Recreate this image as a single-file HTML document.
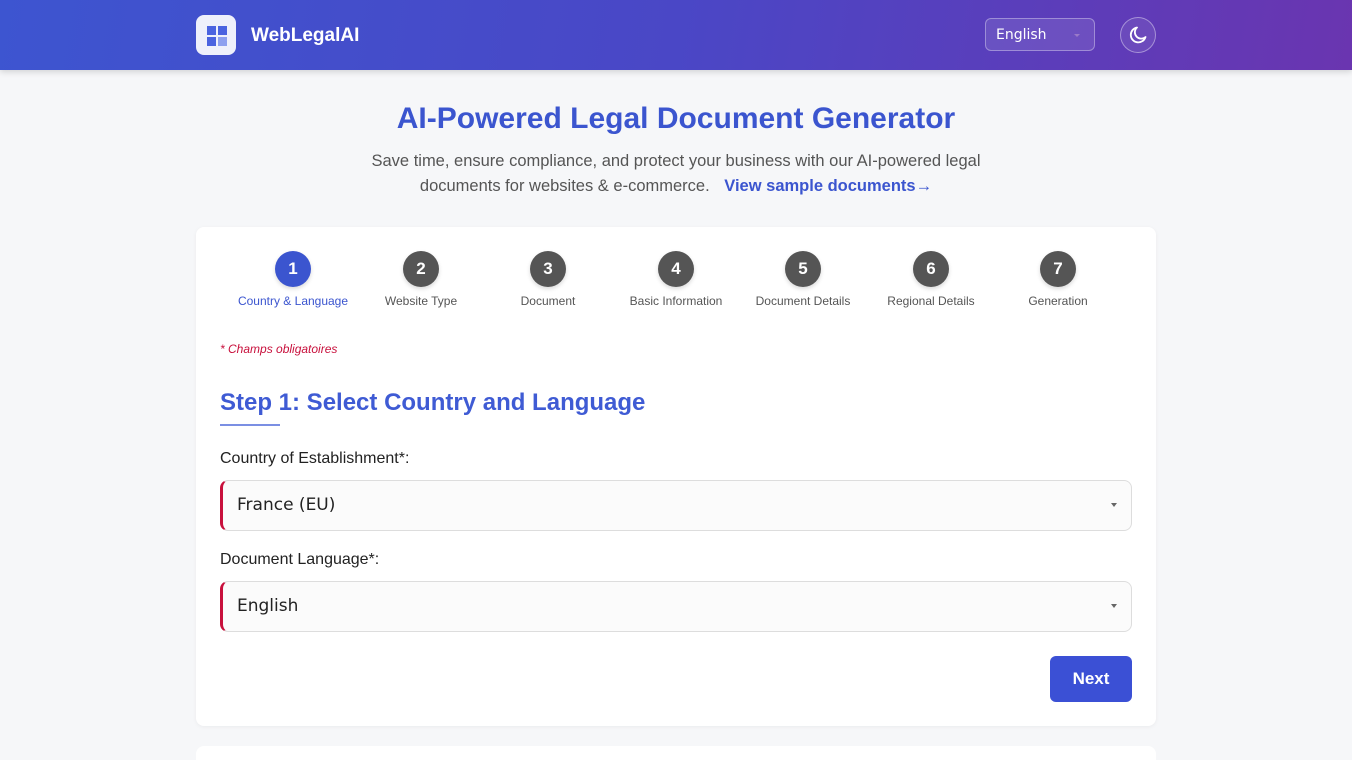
<!DOCTYPE html>
<html style="height:760px;overflow:hidden"><head><meta charset="utf-8"><style>
*{box-sizing:border-box;margin:0;padding:0}
body{width:1352px;height:760px;overflow:hidden;background:#f6f7f9;font-family:"Liberation Sans",sans-serif;color:#222;position:relative}
.hdr{height:70px;background:linear-gradient(100deg,#3d55d0 0%,#4a47c6 50%,#6a35b0 100%);position:relative;box-shadow:0 2px 6px rgba(0,0,0,.15)}
.logo{position:absolute;left:196px;top:15px;width:40px;height:40px;border-radius:8px;background:#eef0fb}
.logo i{position:absolute;width:9px;height:9px;background:#4a63e0}
.brand{position:absolute;left:251px;top:25px;color:#fff;font-weight:bold;font-size:19px}
.lang{position:absolute;left:985px;top:18px;width:110px;height:33px;border:1px solid rgba(255,255,255,.35);background:rgba(255,255,255,.1);border-radius:6px;color:#fff;font-size:14px;padding:8px 10px;font-family:"DejaVu Sans",sans-serif}
.lang:after{content:"";position:absolute;right:14px;top:15px;border:3px solid transparent;border-top:3px solid #9a7ac8}
.moon{position:absolute;left:1120px;top:17px;width:36px;height:36px;border-radius:50%;border:1px solid rgba(255,255,255,.4);background:rgba(255,255,255,.08)}
h1{position:absolute;top:102px;width:100%;text-align:center;color:#3b55cf;font-size:30px;font-weight:bold}
.sub{position:absolute;top:149px;left:356px;width:640px;text-align:center;color:#555;font-size:16.5px;line-height:25px}
.sub a{color:#3b55cf;font-weight:bold;text-decoration:none;margin-left:10px}
.card{position:absolute;left:196px;top:227px;width:960px;height:499px;background:#fff;border-radius:8px;box-shadow:0 1px 4px rgba(0,0,0,.05)}
.card2{position:absolute;left:196px;top:746px;width:960px;height:40px;background:#fff;border-radius:8px}
.step{position:absolute;top:24px;width:140px;text-align:center}
.step b{display:block;margin:0 auto;width:36px;height:36px;border-radius:50%;background:#555;color:#fff;font-size:17px;line-height:36px;box-shadow:0 2px 4px rgba(0,0,0,.15)}
.step span{display:block;margin-top:7px;font-size:12px;color:#555}
.step.on b{background:#3b55cf}.step.on span{color:#3b55cf}
.req{position:absolute;left:24px;top:115px;font-size:12px;font-style:italic;color:#c8103c}
h2{position:absolute;left:24px;top:162px;font-size:24px;color:#3f5bd4;font-weight:bold}
.ul{position:absolute;left:24px;top:197px;width:60px;height:2px;background:#7b8fe3}
.lbl{position:absolute;left:24px;font-size:16px;color:#222}
.sel{position:absolute;left:24px;width:912px;height:51px;border:1px solid #ddd;border-left:3px solid #c8103c;border-radius:8px;background:#fbfbfb;font-size:17px;padding:14px 14px;font-family:"DejaVu Sans",sans-serif;color:#222}
.sel:after{content:"";position:absolute;right:14px;top:22px;border:3px solid transparent;border-top:4px solid #666}
.btn{position:absolute;left:854px;top:429px;width:82px;height:46px;border-radius:6px;background:#3b50d5;color:#fff;font-weight:bold;font-size:17px;text-align:center;line-height:46px}
</style></head><body>
<div class="hdr">
<div class="logo"><i style="left:11px;top:11px"></i><i style="left:22px;top:11px"></i><i style="left:11px;top:22px"></i><i style="left:22px;top:22px;background:#8da0ef"></i></div>
<div class="brand">WebLegalAI</div>
<div class="lang">English</div>
<div class="moon"><svg width="34" height="34" viewBox="0 0 34 34"><path d="M16 9.5a7.5 7.5 0 1 0 8.5 9.5a6 6 0 0 1-8.5-9.5z" fill="none" stroke="#fff" stroke-width="1.8" stroke-linejoin="round"/></svg></div>
</div>
<h1>AI-Powered Legal Document Generator</h1>
<div class="sub">Save time, ensure compliance, and protect your business with our AI-powered legal documents for websites &amp; e-commerce. <a>View sample documents→</a></div>
<div class="card">
<div class="step on" style="left:27px"><b>1</b><span>Country &amp; Language</span></div>
<div class="step" style="left:155px"><b>2</b><span>Website Type</span></div>
<div class="step" style="left:282px"><b>3</b><span>Document</span></div>
<div class="step" style="left:410px"><b>4</b><span>Basic Information</span></div>
<div class="step" style="left:537px"><b>5</b><span>Document Details</span></div>
<div class="step" style="left:665px"><b>6</b><span>Regional Details</span></div>
<div class="step" style="left:792px"><b>7</b><span>Generation</span></div>
<div class="req">* Champs obligatoires</div>
<h2>Step 1: Select Country and Language</h2>
<div class="ul"></div>
<div class="lbl" style="top:223px">Country of Establishment*:</div>
<div class="sel" style="top:253px">France (EU)</div>
<div class="lbl" style="top:324px">Document Language*:</div>
<div class="sel" style="top:354px">English</div>
<div class="btn">Next</div>
</div>
<div class="card2"></div>
</body></html>
